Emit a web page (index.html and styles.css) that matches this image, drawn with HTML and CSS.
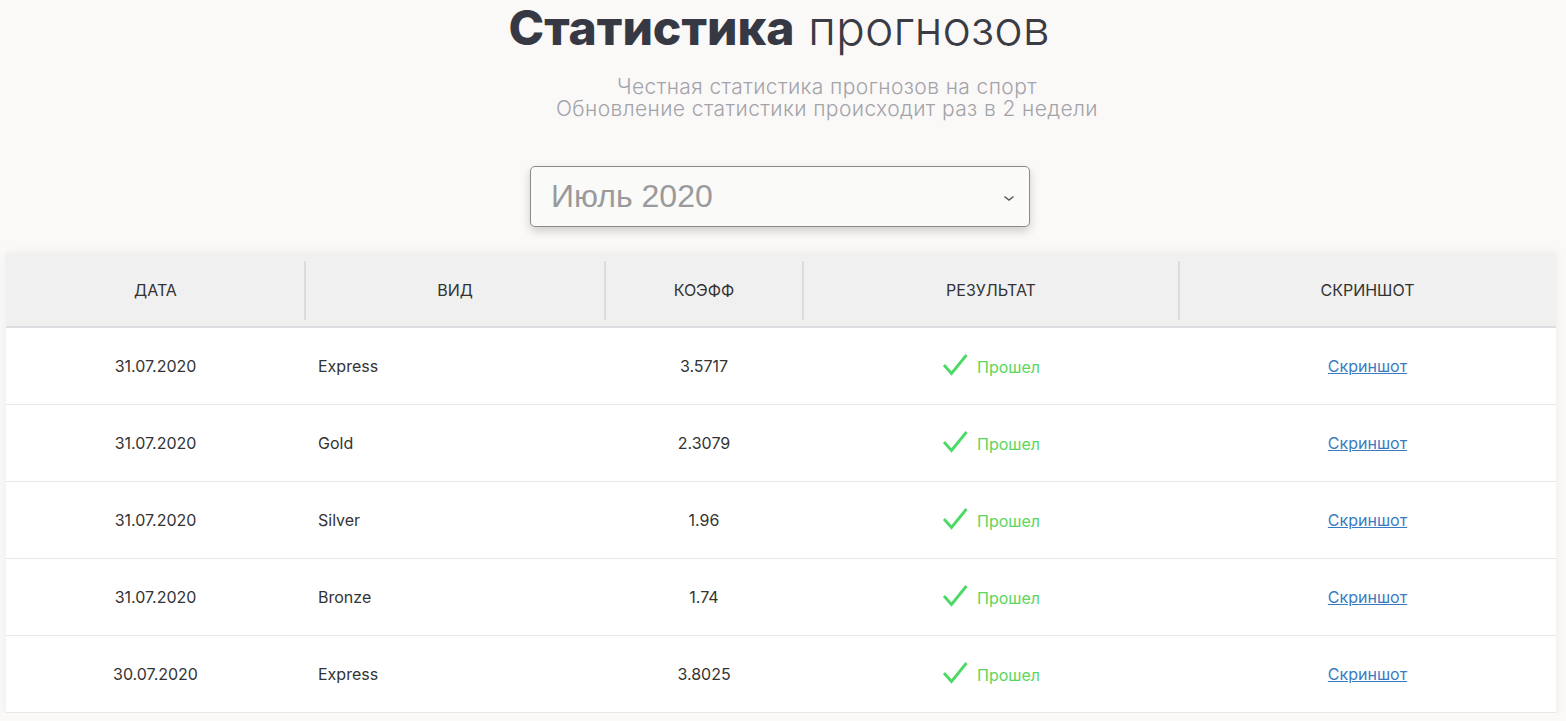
FILE: index.html
```html
<!DOCTYPE html>
<html lang="ru">
<head>
<meta charset="utf-8">
<title>Статистика прогнозов</title>
<link rel="stylesheet" href="styles.css">
</head>
<body>
<div class="page">
  <h1 class="title"><b>Статистика</b> прогнозов</h1>
  <p class="subtitle">Честная статистика прогнозов на спорт<br>Обновление статистики происходит раз в 2 недели</p>
  <div class="select-wrap">
    <div class="select">
      <span>Июль 2020</span>
      <svg class="chev" width="12" height="8" viewBox="0 0 12 8"><path d="M1.5 2.5 L6 6 L10.5 2.5" fill="none" stroke="#555" stroke-width="1.4"/></svg>
    </div>
  </div>
  <div class="table-box">
    <table class="stats">
      <colgroup>
        <col class="c1"><col class="c2"><col class="c3"><col class="c4"><col class="c5">
      </colgroup>
      <thead>
        <tr><th>Дата</th><th>Вид</th><th>Коэфф</th><th>Результат</th><th>Скриншот</th></tr>
      </thead>
      <tbody>
        <tr><td>31.07.2020</td><td class="left">Express</td><td>3.5717</td><td><span class="ok"><svg width="26" height="24" viewBox="0 0 26 24"><path d="M2 12 L9.5 20.5 L24.5 2" fill="none" stroke="#4cd964" stroke-width="2.8"/></svg><span class="ok-t">Прошел</span></span></td><td><a href="#">Скриншот</a></td></tr>
        <tr><td>31.07.2020</td><td class="left">Gold</td><td>2.3079</td><td><span class="ok"><svg width="26" height="24" viewBox="0 0 26 24"><path d="M2 12 L9.5 20.5 L24.5 2" fill="none" stroke="#4cd964" stroke-width="2.8"/></svg><span class="ok-t">Прошел</span></span></td><td><a href="#">Скриншот</a></td></tr>
        <tr><td>31.07.2020</td><td class="left">Silver</td><td>1.96</td><td><span class="ok"><svg width="26" height="24" viewBox="0 0 26 24"><path d="M2 12 L9.5 20.5 L24.5 2" fill="none" stroke="#4cd964" stroke-width="2.8"/></svg><span class="ok-t">Прошел</span></span></td><td><a href="#">Скриншот</a></td></tr>
        <tr><td>31.07.2020</td><td class="left">Bronze</td><td>1.74</td><td><span class="ok"><svg width="26" height="24" viewBox="0 0 26 24"><path d="M2 12 L9.5 20.5 L24.5 2" fill="none" stroke="#4cd964" stroke-width="2.8"/></svg><span class="ok-t">Прошел</span></span></td><td><a href="#">Скриншот</a></td></tr>
        <tr><td>30.07.2020</td><td class="left">Express</td><td>3.8025</td><td><span class="ok"><svg width="26" height="24" viewBox="0 0 26 24"><path d="M2 12 L9.5 20.5 L24.5 2" fill="none" stroke="#4cd964" stroke-width="2.8"/></svg><span class="ok-t">Прошел</span></span></td><td><a href="#">Скриншот</a></td></tr>
      </tbody>
    </table>
  </div>
</div>
</body>
</html>
```
FILE: styles.css
```css
html, body {
  margin: 0;
  padding: 0;
  background: #faf9f7;
  overflow: hidden;
}
.page {
  font-family: "Inter", "Open Sans", sans-serif;
  color: #333;
}
.title {
  margin: 0;
  text-align: center;
  font-size: 48px;
  line-height: 56px;
  font-weight: 300;
  color: #3a3b44;
  margin-left: -8px;
}
.title b {
  font-weight: 800;
  color: #363844;
}
.subtitle {
  margin: 20px 0 0 0;
  padding-left: 88px;
  text-align: center;
  font-size: 21px;
  letter-spacing: 0.4px;
  line-height: 22px;
  font-weight: 300;
  color: #a3a3aa;
}
.select-wrap {
  display: flex;
  justify-content: center;
  margin-top: 46px;
  padding-right: 6px;
}
.select {
  box-sizing: border-box;
  width: 500px;
  height: 61px;
  border: 1px solid #8a8a8a;
  border-radius: 5px;
  background: #fafaf8;
  box-shadow: 0 4px 10px rgba(0,0,0,0.18);
  display: flex;
  align-items: center;
  justify-content: space-between;
  padding: 0 14px 0 20px;
  font-family: "Liberation Sans", Arial, sans-serif;
  font-size: 32px;
  color: #9a9a9c;
}
.chev { margin-top: 2px; }
.table-box {
  margin: 26px 10px 0 6px;
  background: #fff;
  box-shadow: 0 0 10px rgba(0,0,0,0.06);
}
.stats {
  width: 100%;
  border-collapse: collapse;
  table-layout: fixed;
  font-size: 16px;
}
.c1 { width: 299px; }
.c2 { width: 300px; }
.c3 { width: 198px; }
.c4 { width: 376px; }
.c5 { width: auto; }
.stats thead th {
  background: #f0f0f0;
  height: 73px;
  padding: 0;
  font-weight: 400;
  text-transform: uppercase;
  color: #333;
  position: relative;
  border-bottom: 2px solid #dcdde0;
}
.stats thead th + th::before {
  content: "";
  position: absolute;
  left: -1px;
  top: 8px;
  bottom: 6px;
  width: 2px;
  background: #dcdcdc;
}
.stats td {
  height: 76px;
  padding: 0;
  text-align: center;
  border-bottom: 1px solid #e8e8e8;
  color: #333;
}
.stats td.left {
  text-align: left;
  padding-left: 13px;
}
.ok {
  display: inline-flex;
  align-items: center;
  gap: 9px;
  color: #5cd65c;
  font-size: 16px;
  padding-top: 2px;
}
.ok-t { padding-top: 3px; }
a {
  color: #3a7bbf;
  text-decoration: underline;
}
```
